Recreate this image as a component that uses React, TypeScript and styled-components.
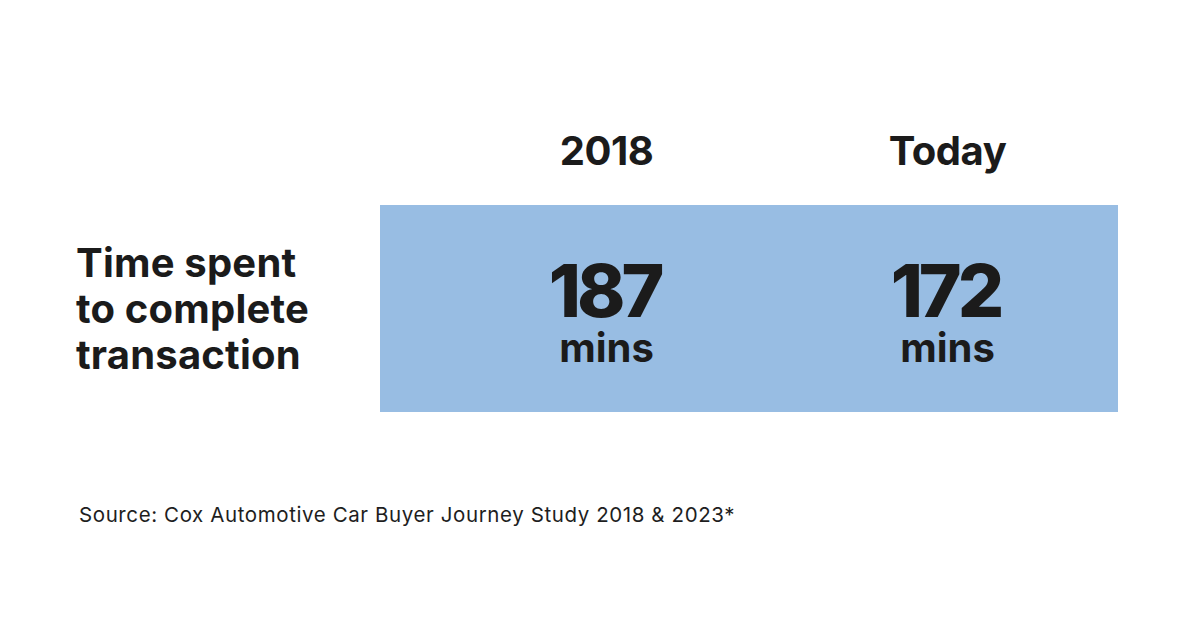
import React from "react";
import styled, { createGlobalStyle } from "styled-components";

const Global = createGlobalStyle`
  html, body { margin: 0; padding: 0; background: #ffffff; }
  body { font-family: Inter, "Noto Sans", "Liberation Sans", sans-serif; color: #1b1b1b; }
`;

const Page = styled.div`
  width: 1200px;
  height: 629px;
  box-sizing: border-box;
  padding: 131px 0 0 76px;
  display: flex;
  flex-direction: column;
`;

const Row = styled.div`
  display: grid;
  grid-template-columns: 304px 738px;
  align-items: center;
`;

const Columns = styled.div<{ $filled?: boolean }>`
  display: grid;
  grid-template-columns: 341px 341px;
  padding-left: 56px;
  background: ${(p) => (p.$filled ? "#98bde3" : "transparent")};
  height: ${(p) => (p.$filled ? "207px" : "auto")};
  box-sizing: border-box;
  align-items: center;
`;

const HeaderRow = styled(Row)`
  margin-bottom: 34px;
`;

const Heading = styled.div`
  font-size: 40px;
  line-height: 40px;
  font-weight: 700;
  text-align: center;
  letter-spacing: -0.5px;
`;

const Label = styled.div`
  font-size: 40px;
  line-height: 46px;
  font-weight: 700;
  letter-spacing: 0.2px;
`;

const Stat = styled.div`
  display: flex;
  flex-direction: column;
  align-items: center;
  padding-top: 7px;
`;

const Value = styled.div`
  font-size: 73px;
  line-height: 68px;
  font-weight: 800;
  letter-spacing: -4px;
  padding-right: 4px;
`;

const Unit = styled.div`
  font-size: 40px;
  line-height: 40px;
  font-weight: 700;
  margin-top: 3px;
`;

const Source = styled.div`
  margin-top: 91px;
  margin-left: 3px;
  font-size: 20.5px;
  line-height: 24px;
  font-weight: 400;
  letter-spacing: 0.6px;
  color: #1e1e1e;
`;

const stats = [
  { year: "2018", value: "187" },
  { year: "Today", value: "172" },
];

export default function App() {
  return (
    <>
      <Global />
      <Page>
        <HeaderRow>
          <div />
          <Columns>
            {stats.map((s) => (
              <Heading key={s.year}>{s.year}</Heading>
            ))}
          </Columns>
        </HeaderRow>
        <Row>
          <Label>
            Time spent
            <br />
            to complete
            <br />
            transaction
          </Label>
          <Columns $filled>
            {stats.map((s) => (
              <Stat key={s.year}>
                <Value>{s.value}</Value>
                <Unit>mins</Unit>
              </Stat>
            ))}
          </Columns>
        </Row>
        <Source>Source: Cox Automotive Car Buyer Journey Study 2018 &amp; 2023*</Source>
      </Page>
    </>
  );
}
